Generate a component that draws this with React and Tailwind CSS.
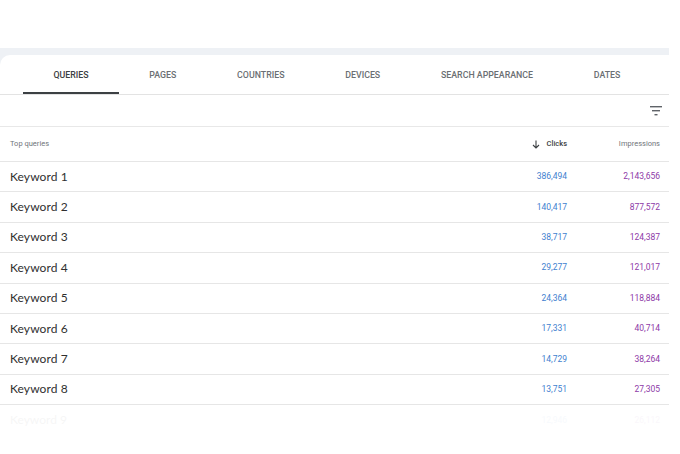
import React from "react";

const tabs = ["QUERIES", "PAGES", "COUNTRIES", "DEVICES", "SEARCH APPEARANCE", "DATES"];

const rows = [
  ["Keyword 1", "386,494", "2,143,656"],
  ["Keyword 2", "140,417", "877,572"],
  ["Keyword 3", "38,717", "124,387"],
  ["Keyword 4", "29,277", "121,017"],
  ["Keyword 5", "24,364", "118,884"],
  ["Keyword 6", "17,331", "40,714"],
  ["Keyword 7", "14,729", "38,264"],
  ["Keyword 8", "13,751", "27,305"],
];

const FilterIcon = () => (
  <svg width="12" height="10" viewBox="0 0 12 10" fill="#5f6368">
    <rect x="0" y="0" width="12" height="1.4" />
    <rect x="2" y="4" width="8" height="1.4" />
    <rect x="4.5" y="8" width="3" height="1.4" />
  </svg>
);

export default function App() {
  return (
    <div className="w-[680px] h-[454px] bg-white overflow-hidden font-['Roboto',sans-serif]">
      <div className="h-[48px]" />
      <div className="w-[669px] bg-[#eef1f5] pt-[7px]">
        <div className="bg-white rounded-tl-[10px]">
          {/* tabs */}
          <div className="flex h-[40px] pl-[23px] border-b border-[#e3e3e3]">
            {tabs.map((t, i) => (
              <div
                key={t}
                className={`relative flex items-center pt-[3px] px-[30.4px] text-[8.8px] font-medium ${
                  i === 0 ? "text-[#3c4043]" : "text-[#6b6f73]"
                }`}
              >
                {t}
                {i === 0 && (
                  <div className="absolute left-0 right-0 bottom-0 h-[2px] bg-[#3c4043]" />
                )}
              </div>
            ))}
          </div>

          {/* filter row */}
          <div className="flex h-[32px] items-center justify-end pr-[7px] border-b border-[#e8e8e8]">
            <FilterIcon />
          </div>

          {/* header */}
          <div className="flex h-[35px] items-center border-b border-[#e6e6e6] text-[7.5px]">
            <div className="flex-1 pl-[10px] text-[#70757a]">Top queries</div>
            <div className="w-[120px] flex items-center justify-end gap-[7px] text-[#3c4043] font-medium text-[7.5px]">
              <svg width="8" height="9" viewBox="0 0 8 9" fill="none" stroke="#3c4043" strokeWidth="1.1">
                <path d="M4 0.5V8M1 5l3 3 3-3" />
              </svg>
              Clicks
            </div>
            <div className="w-[102px] pr-[9px] text-right text-[#70757a] text-[7.5px]">Impressions</div>
          </div>

          {/* rows */}
          {rows.map(([k, c, im]) => (
            <div key={k} className="flex h-[30.4px] items-center border-b border-[#e6e6e6]">
              <div className="flex-1 pl-[10px] text-[12px] text-[#2f2f2f] font-['Lato',sans-serif] tracking-[0.1px]">
                {k}
              </div>
              <div className="w-[120px] text-right text-[8.5px] text-[#3f7fcf]">{c}</div>
              <div className="w-[102px] pr-[9px] text-right text-[8.5px] text-[#8e3aa8]">{im}</div>
            </div>
          ))}
          <div className="flex h-[30px] items-center opacity-[0.04]">
            <div className="flex-1 pl-[10px] text-[12px] text-[#2f2f2f] font-['Lato',sans-serif]">
              Keyword 9
            </div>
            <div className="w-[120px] text-right text-[8.5px] text-[#3f7fcf]">12,946</div>
            <div className="w-[102px] pr-[9px] text-right text-[8.5px] text-[#8e3aa8]">26,112</div>
          </div>
        </div>
      </div>
    </div>
  );
}
